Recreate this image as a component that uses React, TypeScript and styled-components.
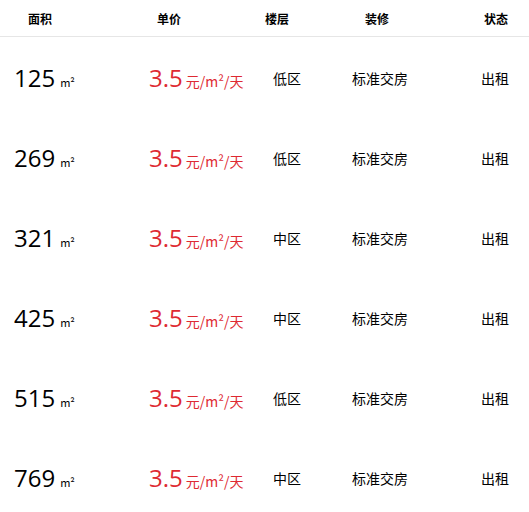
import React from "react"
import styled, { createGlobalStyle } from "styled-components"

const GlobalStyle = createGlobalStyle`
  html, body {
    margin: 0;
    padding: 0;
    background: #fff;
  }
  body {
    font-family: "Noto Sans CJK SC", "Open Sans", sans-serif;
    color: #000;
  }
`

const rows = [
  { area: 125, price: "3.5", floor: "低区", deco: "标准交房", status: "出租" },
  { area: 269, price: "3.5", floor: "低区", deco: "标准交房", status: "出租" },
  { area: 321, price: "3.5", floor: "中区", deco: "标准交房", status: "出租" },
  { area: 425, price: "3.5", floor: "中区", deco: "标准交房", status: "出租" },
  { area: 515, price: "3.5", floor: "低区", deco: "标准交房", status: "出租" },
  { area: 769, price: "3.5", floor: "中区", deco: "标准交房", status: "出租" },
]

const App = () => {
  return (
    <Table>
      <GlobalStyle />
      <HeadRow>
        <HeadCell>面积</HeadCell>
        <HeadCell>单价</HeadCell>
        <HeadCell>楼层</HeadCell>
        <HeadCell>装修</HeadCell>
        <HeadCell>状态</HeadCell>
      </HeadRow>
      {rows.map((r, idx) => (
        <Row key={`${r.area}${idx}`}>
          <Cell>
            <Big>{r.area}</Big>
            <Unit>m²</Unit>
          </Cell>
          <Cell>
            <Big red>{r.price}</Big>
            <PriceUnit>元/m²/天</PriceUnit>
          </Cell>
          <Cell>{r.floor}</Cell>
          <Cell>{r.deco}</Cell>
          <Cell>{r.status}</Cell>
        </Row>
      ))}
    </Table>
  )
}

const Table = styled.div`
  width: 529px;
  display: flex;
  flex-direction: column;
`

const HeadRow = styled.div`
  display: grid;
  grid-template-columns: 129px 108px 100px 119px 1fr;
  align-items: center;
  height: 37px;
  padding-left: 28px;
  padding-top: 1px;
  border-bottom: 1px solid #e6e6e6;
  box-sizing: border-box;
`

const HeadCell = styled.div`
  font-size: 12px;
  font-weight: bold;
  line-height: 1;
`

const Row = styled.div`
  display: grid;
  grid-template-columns: 135px 124px 79px 129px 1fr;
  align-items: center;
  height: 80px;
  padding-left: 14px;
  padding-top: 2px;
  box-sizing: border-box;
`

const Cell = styled.div`
  display: flex;
  align-items: baseline;
  font-size: 14px;
  white-space: nowrap;
`

const Big = styled.span<{ red?: boolean }>`
  font-family: "Open Sans", "Noto Sans CJK SC", sans-serif;
  font-size: 24px;
  line-height: 1;
  color: ${props => (props.red ? "#de2a32" : "#000")};
`

const Unit = styled.span`
  font-size: 11px;
  margin-left: 5px;
`

const PriceUnit = styled.span`
  font-size: 14px;
  margin-left: 3px;
  color: #de2a32;
`

export default App
